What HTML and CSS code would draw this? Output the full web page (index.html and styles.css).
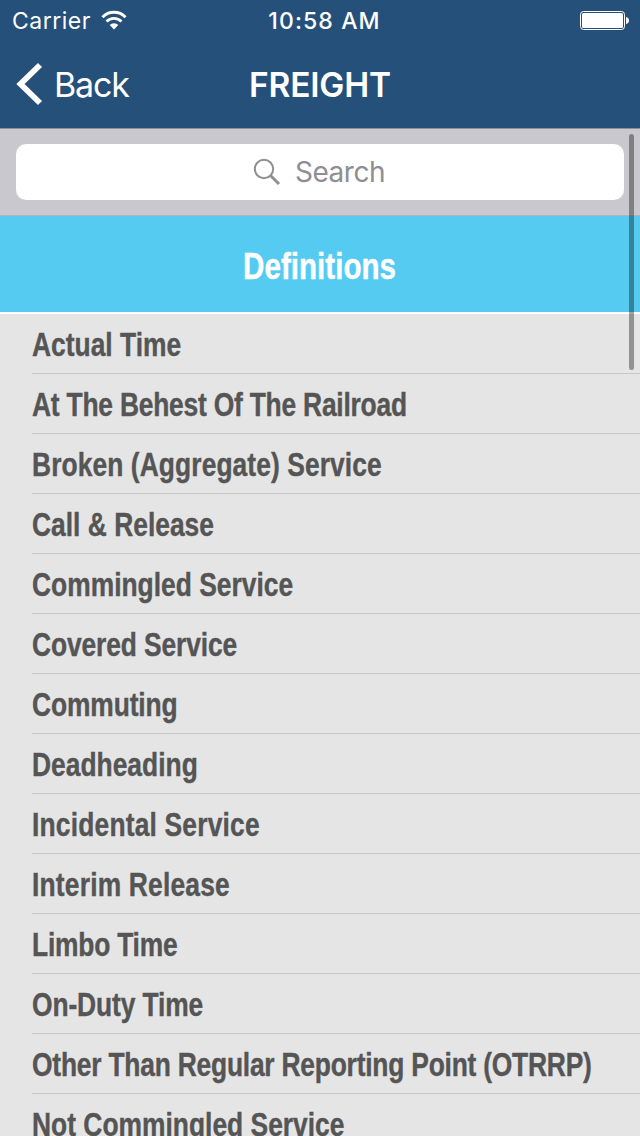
FILE: index.html
```html
<!DOCTYPE html>
<html lang="en">
<head>
    <meta charset="UTF-8">
    <meta name="viewport" content="width=device-width, initial-scale=1.0">
    <title>Freight</title>
    <link rel="stylesheet" href="styles.css">
</head>
<body>
    <header class="header">
        <div class="status-bar">
            <div class="status-left">
                <span class="carrier">Carrier</span>
                <svg class="wifi" width="26" height="20" viewBox="0 0 26 20">
                    <path d="M1.500 7.200a16 16 0 0 1 23 0" fill="none" stroke="#fff" stroke-width="3"/>
                    <path d="M5.500 11.500a10.400 10.400 0 0 1 15 0" fill="none" stroke="#fff" stroke-width="2.800"/>
                    <path d="M13 19.500l-4.300-4.400a6.100 6.100 0 0 1 8.600 0z" fill="#fff"/>
                </svg>
            </div>
            <span class="clock">10:58 AM</span>
            <div class="status-right">
                <svg class="battery" width="50" height="20" viewBox="0 0 50 20">
                    <rect x="0.5" y="1.5" width="44" height="18" rx="3" fill="none" stroke="#fff"/>
                    <rect x="2" y="3" width="41" height="15" rx="1.5" fill="#fff"/>
                    <path d="M46 7c4 .5 4 6.500 0 7z" fill="#fff"/>
                </svg>
            </div>
        </div>
        <nav class="nav-bar">
            <a class="back">
                <svg class="chevron" width="28" height="44" viewBox="0 0 28 44">
                    <path d="M25 3L5.500 22L25 41" fill="none" stroke="#fff" stroke-width="5.800"/>
                </svg>
                <span class="back-label">Back</span>
            </a>
            <h1 class="nav-title">FREIGHT</h1>
            <span></span>
        </nav>
    </header>

    <main class="content">
        <div class="search-bar">
            <div class="search-field">
                <svg class="search-icon" width="28" height="28" viewBox="0 0 28 28">
                    <circle cx="11" cy="11" r="9.200" fill="none" stroke="#8e8e93" stroke-width="2"/>
                    <path d="M17.500 17.500L26 26" stroke="#8e8e93" stroke-width="3"/>
                </svg>
                <span class="search-label">Search</span>
            </div>
        </div>

        <h2 class="section-header"><span class="condensed">Definitions</span></h2>

        <ul class="list">
            <li class="row"><span class="condensed">Actual Time</span></li>
            <li class="row"><span class="condensed tight">At The Behest Of The Railroad</span></li>
            <li class="row"><span class="condensed loose">Broken (Aggregate) Service</span></li>
            <li class="row"><span class="condensed">Call &amp; Release</span></li>
            <li class="row"><span class="condensed">Commingled Service</span></li>
            <li class="row"><span class="condensed snug">Covered Service</span></li>
            <li class="row"><span class="condensed snug">Commuting</span></li>
            <li class="row"><span class="condensed">Deadheading</span></li>
            <li class="row"><span class="condensed looser">Incidental Service</span></li>
            <li class="row"><span class="condensed looser">Interim Release</span></li>
            <li class="row"><span class="condensed tight">Limbo Time</span></li>
            <li class="row"><span class="condensed snug">On-Duty Time</span></li>
            <li class="row"><span class="condensed tight">Other Than Regular Reporting Point (OTRRP)</span></li>
            <li class="row"><span class="condensed">Not Commingled Service</span></li>
        </ul>

        <div class="scroll-thumb"></div>
    </main>
</body>
</html>
```

FILE: styles.css
```css
* {
    box-sizing: border-box;
}

body {
    margin: 0;
    height: 1136px;
    overflow: hidden;
    display: flex;
    flex-direction: column;
    background-color: #e5e5e5;
    font-family: Inter, "Liberation Sans", sans-serif;
}

.header {
    flex: none;
    height: 128px;
    background-color: #25507a;
    color: #fff;
}

/* Status bar */
.status-bar {
    display: grid;
    grid-template-columns: 1fr auto 1fr;
    align-items: center;
    height: 40px;
    padding: 0 10px 0 12px;
}

.status-left {
    display: flex;
    align-items: center;
    gap: 10px;
}

.carrier {
    padding-top: 2px;
    font-size: 23px;
    line-height: 38px;
    font-weight: 400;
    letter-spacing: 0.5px;
}

.clock {
    padding: 2px 0 0 7px;
    font-size: 23px;
    line-height: 38px;
    font-weight: 550;
    letter-spacing: 1.1px;
}

.status-right {
    display: flex;
    justify-content: flex-end;
}

/* Navigation bar */
.nav-bar {
    display: grid;
    grid-template-columns: 1fr auto 1fr;
    align-items: center;
    height: 88px;
    padding: 0 15px;
}

.back {
    display: flex;
    align-items: center;
    gap: 11px;
}

.back-label {
    font-size: 34px;
    font-weight: 400;
    letter-spacing: -1.2px;
}

.nav-title {
    margin: 0;
    padding-top: 1px;
    font-size: 33.5px;
    font-weight: 600;
    letter-spacing: -0.2px;
}

/* Search */
.content {
    position: relative;
    flex: 1;
    min-height: 0;
    overflow: hidden;
}

.search-bar {
    height: 88px;
    padding: 15px 16px;
    border-top: 1px solid #8f8e90;
    border-bottom: 1px solid #b2b1b6;
    background-color: #c9c8ce;
}

.search-field {
    display: flex;
    align-items: center;
    justify-content: center;
    gap: 14px;
    height: 56px;
    padding-right: 2px;
    border-radius: 10px;
    background-color: #fff;
    color: #8e8e93;
}

.search-label {
    font-size: 28px;
    letter-spacing: -0.5px;
}

/* Definitions list */
.condensed {
    display: inline-block;
    font-family: "Liberation Sans", sans-serif;
    font-weight: 700;
    white-space: nowrap;
    transform: scaleX(0.8);
    -webkit-text-stroke: 0.4px currentColor;
}

.section-header {
    display: flex;
    align-items: center;
    justify-content: center;
    height: 98px;
    margin: 0;
    padding-top: 6px;
    border-bottom: 2px solid #fff;
    background-color: #55cbf2;
    color: #fff;
    font-size: 37px;
}

.list {
    margin: 0;
    padding: 0;
    list-style: none;
    overflow: hidden;
}

.row {
    height: 60px;
    margin-left: 32px;
    border-bottom: 1px solid #c8c7cc;
    color: #555;
    font-size: 33px;
    line-height: 60px;
}

.row .condensed {
    transform-origin: left center;
}

.tight {
    letter-spacing: -0.28px;
}

.snug {
    letter-spacing: -0.15px;
}

.loose {
    letter-spacing: 0.1px;
}

.looser {
    letter-spacing: 0.23px;
}

.scroll-thumb {
    position: absolute;
    top: 6px;
    right: 6px;
    width: 5px;
    height: 236px;
    border-radius: 3px;
    background-color: rgba(0, 0, 0, 0.36);
}
```
